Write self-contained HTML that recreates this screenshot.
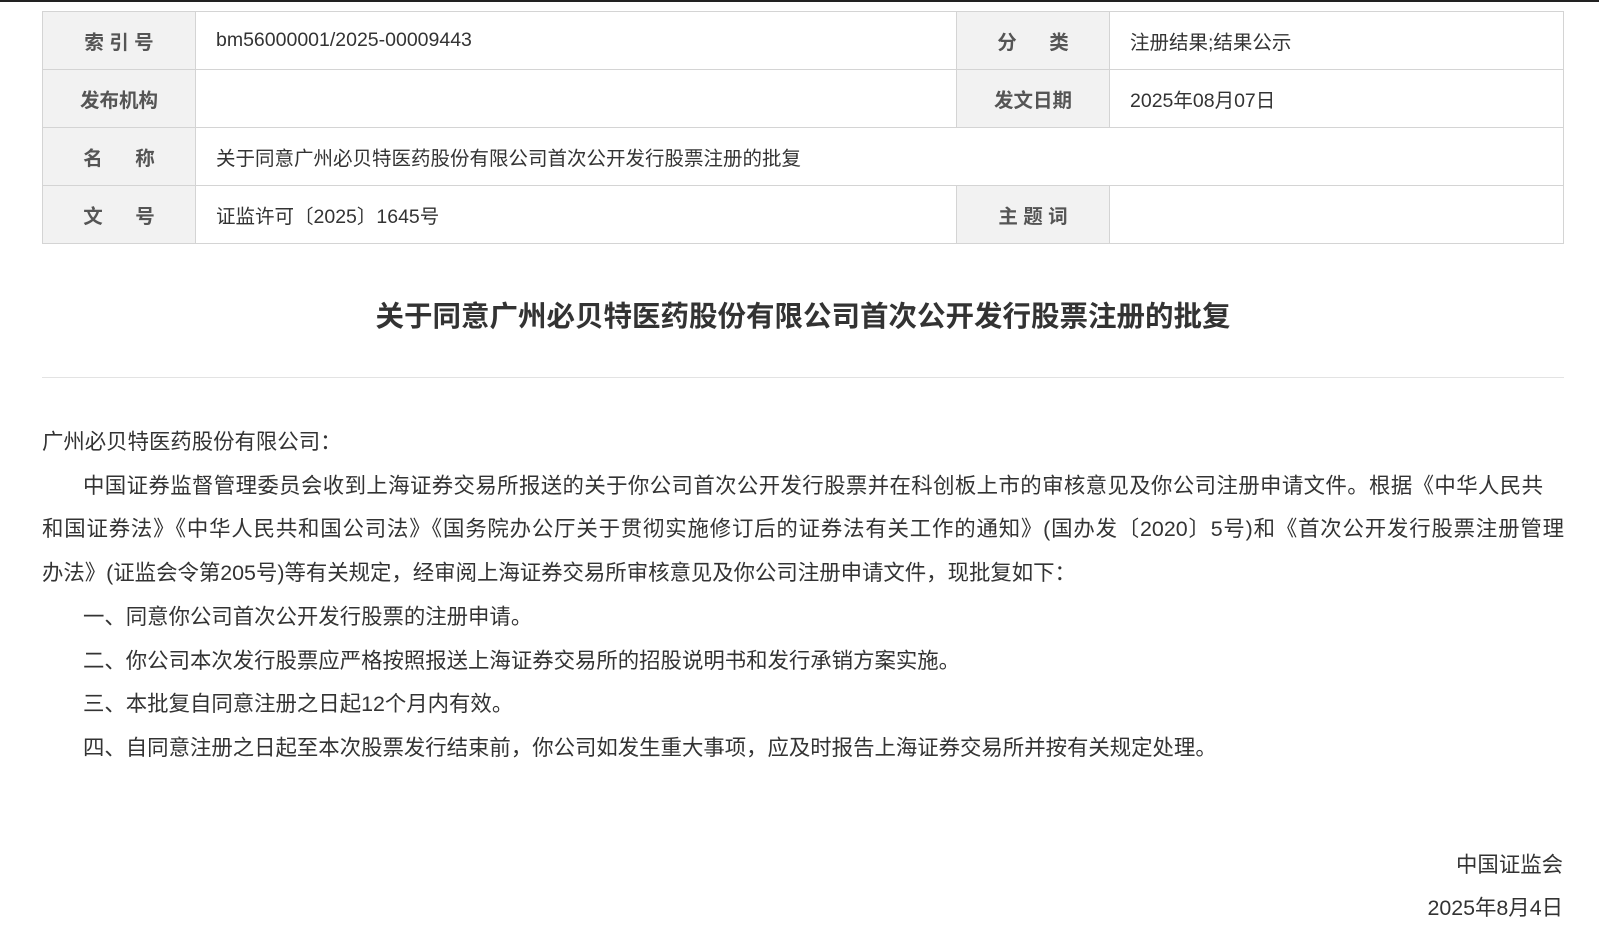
<!DOCTYPE html>
<html><head><meta charset="utf-8"><style>
body{margin:0;background:#fff;width:1599px;height:936px;overflow:hidden;font-family:"Liberation Sans","Microsoft YaHei","Noto Sans CJK SC",sans-serif;color:#333;}
.topline{position:absolute;left:0;top:0;width:1599px;height:2px;background:#222;}
table{position:absolute;left:42px;top:11px;width:1522px;border-collapse:collapse;}
td{border:1px solid #d4d4d4;height:57px;font-size:19.5px;padding:0;}
td.h{background:#f2f2f2;font-weight:bold;color:#555;text-align:center;width:152px;}
td.v{padding-left:20px;color:#333;}
.title{position:absolute;left:0;width:1606px;top:294px;text-align:center;font-size:28.5px;font-weight:bold;color:#333;}
.hr{position:absolute;left:42px;top:377px;width:1522px;height:1px;background:#e3e3e3;}
.body{position:absolute;left:42px;top:421px;width:1522px;font-size:21.4px;line-height:43.7px;color:#333;}
.j{text-align:justify;text-align-last:justify;white-space:nowrap;}
.in{padding-left:41px;}
.sign{position:absolute;right:36px;font-size:21.4px;color:#333;}
</style></head><body>
<div class="topline"></div>
<table>
<tr><td class="h">索&nbsp;引&nbsp;号</td><td class="v" style="width:740px">bm56000001/2025-00009443</td><td class="h">分&nbsp;&nbsp;&nbsp;&nbsp;&nbsp;&nbsp;类</td><td class="v">注册结果;结果公示</td></tr>
<tr><td class="h">发布机构</td><td class="v"></td><td class="h">发文日期</td><td class="v">2025年08月07日</td></tr>
<tr><td class="h">名&nbsp;&nbsp;&nbsp;&nbsp;&nbsp;&nbsp;称</td><td class="v" colspan="3">关于同意广州必贝特医药股份有限公司首次公开发行股票注册的批复</td></tr>
<tr><td class="h">文&nbsp;&nbsp;&nbsp;&nbsp;&nbsp;&nbsp;号</td><td class="v">证监许可〔2025〕1645号</td><td class="h">主&nbsp;题&nbsp;词</td><td class="v"></td></tr>
</table>
<div class="title">关于同意广州必贝特医药股份有限公司首次公开发行股票注册的批复</div>
<div class="hr"></div>
<div class="body">
<div>广州必贝特医药股份有限公司：</div>
<div class="in j" style="padding-right:21px">中国证券监督管理委员会收到上海证券交易所报送的关于你公司首次公开发行股票并在科创板上市的审核意见及你公司注册申请文件。根据《中华人民共</div>
<div class="j">和国证券法》《中华人民共和国公司法》《国务院办公厅关于贯彻实施修订后的证券法有关工作的通知》(国办发〔2020〕5号)和《首次公开发行股票注册管理</div>
<div>办法》(证监会令第205号)等有关规定，经审阅上海证券交易所审核意见及你公司注册申请文件，现批复如下：</div>
<div class="in">一、同意你公司首次公开发行股票的注册申请。</div>
<div class="in">二、你公司本次发行股票应严格按照报送上海证券交易所的招股说明书和发行承销方案实施。</div>
<div class="in">三、本批复自同意注册之日起12个月内有效。</div>
<div class="in">四、自同意注册之日起至本次股票发行结束前，你公司如发生重大事项，应及时报告上海证券交易所并按有关规定处理。</div>
</div>
<div class="sign" style="top:848px">中国证监会</div>
<div class="sign" style="top:891px">2025年8月4日</div>
</body></html>
